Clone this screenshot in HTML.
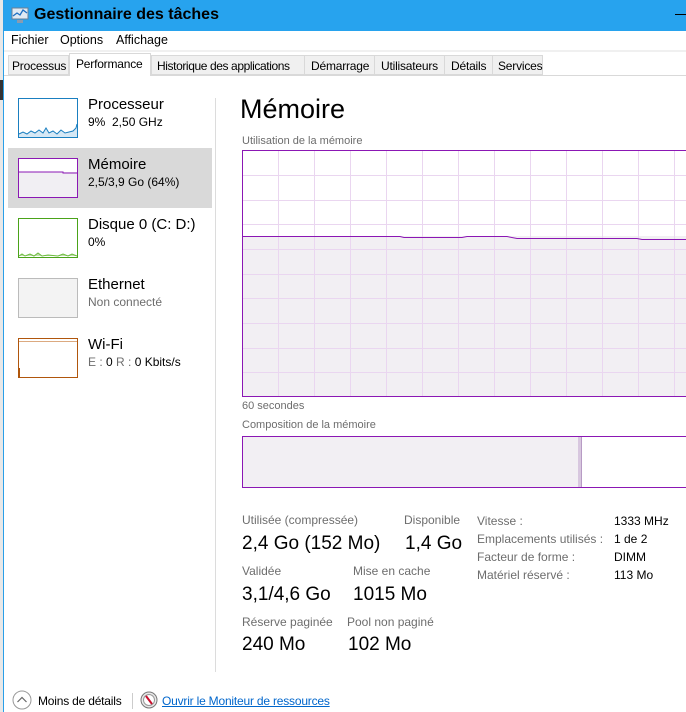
<!DOCTYPE html><html><head><meta charset="utf-8"><style>
*{margin:0;padding:0;box-sizing:border-box}
body{width:686px;height:712px;overflow:hidden;background:#fff;font-family:"Liberation Sans",sans-serif;color:#000;position:relative}
.a{position:absolute;white-space:nowrap}
.g{color:#6d6d6d}
.t{font-size:12px;letter-spacing:-0.2px}
</style></head><body>
<div class="a" style="left:0;top:0;width:3px;height:712px;background:#e8e8e8"></div>
<div class="a" style="left:0;top:80px;width:3px;height:20px;background:#333"></div>
<div class="a" style="left:3px;top:0;width:1px;height:712px;background:#2a9fe8"></div>
<div class="a" style="left:4px;top:0;width:682px;height:31px;background:#27a3ee"></div>
<svg class="a" style="left:11px;top:7px" width="19" height="17"><rect x="1" y="1" width="16" height="11" fill="#dfe9f3" stroke="#6a7f96"/><polyline points="2,9 6,6 9,8 12,3 16,6" fill="none" stroke="#1e6fc2" stroke-width="1.3"/><rect x="6" y="13" width="6" height="3" fill="#8a9bb0"/></svg>
<div class="a" style="left:34px;top:6px;font-size:16px;font-weight:bold">Gestionnaire des tâches</div>
<div class="a" style="left:675px;top:14px;width:11px;height:1px;background:#000"></div>
<div class="a" style="left:11px;top:33px;font-size:12.5px">Fichier</div>
<div class="a" style="left:60px;top:33px;font-size:12.5px">Options</div>
<div class="a" style="left:116px;top:33px;font-size:12.5px">Affichage</div>
<div class="a" style="left:4px;top:50px;width:682px;height:2px;background:#f0f0f0"></div>
<div class="a" style="left:4px;top:75px;width:682px;height:1px;background:#d9d9d9"></div>
<div class="a" style="left:8px;top:55px;width:61px;height:20px;background:#f0f0f0;border:1px solid #d9d9d9"></div>
<div class="a t" style="left:12px;top:59px">Processus</div>
<div class="a" style="left:69px;top:53px;width:82px;height:23px;background:#fff;border:1px solid #d9d9d9;border-bottom:none"></div>
<div class="a t" style="left:76px;top:57px">Performance</div>
<div class="a" style="left:151px;top:55px;width:392px;height:20px;background:#f0f0f0;border:1px solid #d9d9d9"></div>
<div class="a" style="left:304px;top:55px;width:1px;height:20px;background:#d9d9d9"></div>
<div class="a" style="left:374px;top:55px;width:1px;height:20px;background:#d9d9d9"></div>
<div class="a" style="left:444px;top:55px;width:1px;height:20px;background:#d9d9d9"></div>
<div class="a" style="left:492px;top:55px;width:1px;height:20px;background:#d9d9d9"></div>
<div class="a t" style="left:157px;top:59px;letter-spacing:-0.4px">Historique des applications</div>
<div class="a t" style="left:311px;top:59px">Démarrage</div>
<div class="a t" style="left:381px;top:59px">Utilisateurs</div>
<div class="a t" style="left:451px;top:59px">Détails</div>
<div class="a t" style="left:498px;top:59px">Services</div>

<div class="a" style="left:215px;top:98px;width:1px;height:574px;background:#dcdcdc"></div>
<div class="a" style="left:8px;top:148px;width:204px;height:60px;background:#d9d9d9"></div>
<svg class="a" style="left:18px;top:98px" width="60" height="40"><rect x="0.5" y="0.5" width="59" height="39" fill="#fff" stroke="#1a7fc0"/><polygon points="1,36 5,34 9,36 13,33 17,35 21,32 25,35 28,30 31,35 35,33 39,36 43,32 47,35 51,34 55,33 58,30 59,26 59,39 1,39" fill="#d5e8f5"/><polyline points="1,36 5,34 9,36 13,33 17,35 21,32 25,35 28,30 31,35 35,33 39,36 43,32 47,35 51,34 55,33 58,30 59,26" fill="none" stroke="#1a7fc0"/></svg>
<svg class="a" style="left:18px;top:158px" width="60" height="40"><rect x="0.5" y="0.5" width="59" height="39" fill="#fff" stroke="#8b17b4"/><rect x="1" y="14" width="58" height="25" fill="#f1eff3"/><polyline points="1,14 45,14 45,15 59,15" fill="none" stroke="#8b17b4"/></svg>
<svg class="a" style="left:18px;top:218px" width="60" height="40"><rect x="0.5" y="0.5" width="59" height="39" fill="#fff" stroke="#4aa319"/><polyline points="1,38 4,36 7,38 12,36 16,38 20,35 24,38 30,37 40,38 45,36 50,38 54,36 59,38" fill="#bfe0a8" stroke="#6dbb3f"/></svg>
<svg class="a" style="left:18px;top:278px" width="60" height="40"><rect x="0.5" y="0.5" width="59" height="39" fill="#f3f3f3" stroke="#bbb"/></svg>
<svg class="a" style="left:18px;top:338px" width="60" height="40"><rect x="0.5" y="0.5" width="59" height="39" fill="#fff" stroke="#b0560c"/><line x1="1" y1="3.5" x2="59" y2="3.5" stroke="#dcaa80"/><line x1="1.5" y1="30" x2="1.5" y2="39" stroke="#b0560c"/></svg>
<div class="a" style="left:88px;top:96px;font-size:15px">Processeur</div>
<div class="a" style="left:88px;top:115px;font-size:12px">9%&nbsp; 2,50 GHz</div>
<div class="a" style="left:88px;top:156px;font-size:15px">Mémoire</div>
<div class="a" style="left:88px;top:175px;font-size:12px">2,5/3,9 Go (64%)</div>
<div class="a" style="left:88px;top:216px;font-size:15px">Disque 0 (C: D:)</div>
<div class="a" style="left:88px;top:235px;font-size:12px">0%</div>
<div class="a" style="left:88px;top:276px;font-size:15px">Ethernet</div>
<div class="a g" style="left:88px;top:295px;font-size:12px">Non connecté</div>
<div class="a" style="left:88px;top:336px;font-size:15px">Wi-Fi</div>
<div class="a" style="left:88px;top:355px;font-size:12px"><span class="g">E :</span> 0 <span class="g">R :</span> 0 Kbits/s</div>

<div class="a" style="left:240px;top:94px;font-size:27px">Mémoire</div>
<div class="a g" style="left:242px;top:135px;font-size:11px">Utilisation de la mémoire</div>
<svg class="a" style="left:242px;top:150px" width="444" height="248">
<rect x="1" y="86" width="443" height="160" fill="#f2eff3"/>
<g stroke="#ead6f0" stroke-width="1">
<line x1="36.5" y1="0" x2="36.5" y2="246"/><line x1="72.5" y1="0" x2="72.5" y2="246"/><line x1="108.5" y1="0" x2="108.5" y2="246"/><line x1="144.5" y1="0" x2="144.5" y2="246"/><line x1="180.5" y1="0" x2="180.5" y2="246"/><line x1="216.5" y1="0" x2="216.5" y2="246"/><line x1="252.5" y1="0" x2="252.5" y2="246"/><line x1="288.5" y1="0" x2="288.5" y2="246"/><line x1="324.5" y1="0" x2="324.5" y2="246"/><line x1="360.5" y1="0" x2="360.5" y2="246"/><line x1="396.5" y1="0" x2="396.5" y2="246"/><line x1="432.5" y1="0" x2="432.5" y2="246"/>
<line x1="0" y1="25.5" x2="444" y2="25.5"/><line x1="0" y1="50.5" x2="444" y2="50.5"/><line x1="0" y1="74.5" x2="444" y2="74.5"/><line x1="0" y1="99.5" x2="444" y2="99.5"/><line x1="0" y1="124.5" x2="444" y2="124.5"/><line x1="0" y1="148.5" x2="444" y2="148.5"/><line x1="0" y1="173.5" x2="444" y2="173.5"/><line x1="0" y1="198.5" x2="444" y2="198.5"/><line x1="0" y1="222.5" x2="444" y2="222.5"/>
</g>
<polyline points="0,86.5 158,86.5 162,87.5 220,87.5 225,86.5 265,86.5 275,88.5 395,88.5 400,89.5 444,89.5" fill="none" stroke="#8b17b4"/>
<path d="M0.5,247 V0.5 H444 M0,246.5 H444" fill="none" stroke="#8b17b4"/>
</svg>
<div class="a g" style="left:242px;top:400px;font-size:11px">60 secondes</div>
<div class="a g" style="left:242px;top:419px;font-size:11px">Composition de la mémoire</div>
<svg class="a" style="left:242px;top:436px" width="444" height="52">
<rect x="1" y="1" width="335" height="50" fill="#f2eff3"/>
<rect x="336" y="1" width="3" height="50" fill="#d8c7df"/><line x1="339.5" y1="1" x2="339.5" y2="51" stroke="#b79bc4"/>
<path d="M0.5,52 V0.5 H444 M0,51.5 H444" fill="none" stroke="#8b17b4"/>
</svg>
<div class="a g" style="left:242px;top:513px;font-size:12px">Utilisée (compressée)</div>
<div class="a g" style="left:404px;top:513px;font-size:12px">Disponible</div>
<div class="a" style="left:242px;top:533px;font-size:19px">2,4 Go (152 Mo)</div>
<div class="a" style="left:405px;top:533px;font-size:19px">1,4 Go</div>
<div class="a g" style="left:242px;top:564px;font-size:12px">Validée</div>
<div class="a g" style="left:353px;top:564px;font-size:12px">Mise en cache</div>
<div class="a" style="left:242px;top:584px;font-size:19px">3,1/4,6 Go</div>
<div class="a" style="left:353px;top:584px;font-size:19px">1015 Mo</div>
<div class="a g" style="left:242px;top:615px;font-size:12px">Réserve paginée</div>
<div class="a g" style="left:347px;top:615px;font-size:12px">Pool non paginé</div>
<div class="a" style="left:242px;top:634px;font-size:19px">240 Mo</div>
<div class="a" style="left:348px;top:634px;font-size:19px">102 Mo</div>
<div class="a g" style="left:477px;top:512px;font-size:12px;line-height:18px">Vitesse :<br>Emplacements utilisés :<br>Facteur de forme :<br>Matériel réservé :</div>
<div class="a" style="left:614px;top:512px;font-size:12px;line-height:18px">1333 MHz<br>1 de 2<br>DIMM<br>113 Mo</div>

<svg class="a" style="left:12px;top:690px" width="20" height="20"><circle cx="10" cy="10" r="9" fill="#fff" stroke="#999"/><polyline points="5.5,12 10,7.5 14.5,12" fill="none" stroke="#666" stroke-width="1.2"/></svg>
<div class="a" style="left:38px;top:694px;font-size:12px;letter-spacing:-0.2px">Moins de détails</div>
<div class="a" style="left:132px;top:693px;width:1px;height:16px;background:#ccc"></div>
<svg class="a" style="left:140px;top:691px" width="18" height="18"><circle cx="9" cy="9" r="8" fill="#e8e8e8" stroke="#777"/><circle cx="9" cy="9" r="5.5" fill="#fff" stroke="#999"/><line x1="6" y1="5" x2="12" y2="13" stroke="#c8102e" stroke-width="2"/></svg>
<div class="a" style="left:162px;top:694px;font-size:12px;letter-spacing:-0.2px;color:#0066cc;text-decoration:underline">Ouvrir le Moniteur de ressources</div>
</body></html>
